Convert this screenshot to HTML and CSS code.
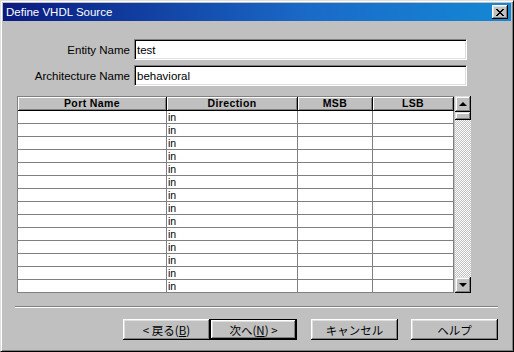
FILE: index.html
```html
<!DOCTYPE html>
<html lang="ja">
<head>
    <meta charset="UTF-8">
    <title>Define VHDL Source</title>
    <link rel="stylesheet" href="styles.css">
</head>
<body>
    <div class="window">
        <div class="titlebar">
            <span class="title">Define VHDL Source</span>
            <button class="close">
                <svg width="8" height="7" viewBox="0 0 8 7" shape-rendering="crispEdges">
                    <path d="M0 0h2v1h1v1h2v-1h1v-1h2v1h-1v1h-1v1h-1v1h1v1h1v1h1v1h-2v-1h-1v-1h-2v1h-1v1h-2v-1h1v-1h1v-1h1v-1h-1v-1h-1v-1h-1z" fill="#000"/>
                </svg>
            </button>
        </div>

        <div class="content">
            <div class="form">
                <label>Entity Name</label>
                <input type="text" value="test">
                <label>Architecture Name</label>
                <input type="text" value="behavioral">
            </div>

            <div class="ports">
                <div class="grid" id="grid">
                    <div class="hd">Port Name</div>
                    <div class="hd">Direction</div>
                    <div class="hd">MSB</div>
                    <div class="hd">LSB</div>
                </div>
                <div class="scrollbar">
                    <div class="sb-btn"><span class="arrow up"></span></div>
                    <div class="sb-thumb"></div>
                    <div class="sb-track"></div>
                    <div class="sb-btn"><span class="arrow down"></span></div>
                </div>
            </div>

            <div class="separator"></div>

            <div class="buttons">
                <button class="btn">&lt; 戻る(<u>B</u>)</button>
                <button class="btn default">次へ(<u>N</u>) &gt;</button>
                <button class="btn gap">キャンセル</button>
                <button class="btn gap2">ヘルプ</button>
            </div>
        </div>
    </div>

    <script>
        // 14 visible port rows, direction defaults to "in"
        const grid = document.getElementById('grid');
        for (let i = 0; i < 14; i++) {
            ['', 'in', '', ''].forEach(text => {
                const cell = document.createElement('div');
                cell.className = 'cell';
                cell.textContent = text;
                grid.appendChild(cell);
            });
        }
    </script>
</body>
</html>
```

FILE: styles.css
```css
* {
    margin: 0;
    padding: 0;
    box-sizing: border-box;
}

body {
    font-family: "Liberation Sans", "Noto Sans CJK JP", sans-serif;
    font-size: 11.5px;
    background: #c0c0c0;
}

.window {
    width: 514px;
    height: 352px;
    padding: 2px;
    background: #c0c0c0;
    border: 1px solid;
    border-color: #dfdfdf #000 #000 #dfdfdf;
    box-shadow: inset 1px 1px #fff, inset -1px -1px #808080;
}

.titlebar {
    height: 18px;
    display: flex;
    align-items: center;
    justify-content: space-between;
    background: linear-gradient(to right, #0a1a80, #1a6ac8 60%, #1488d4);
}

.title {
    color: #fff;
    padding-left: 3px;
    font-size: 11.5px;
}

.close {
    width: 16px;
    height: 14px;
    margin-right: 3px;
    border: none;
    background: #c0c0c0;
    display: flex;
    align-items: center;
    justify-content: center;
    box-shadow: inset -1px -1px #000, inset 1px 1px #fff, inset -2px -2px #808080, inset 2px 2px #dfdfdf;
}

.content {
    padding-top: 18px;
}

/* 名前入力 */
.form {
    display: grid;
    grid-template-columns: 128px 333px;
    column-gap: 3px;
    row-gap: 5px;
}

.form label {
    text-align: right;
    align-self: center;
    padding-right: 1px;
    color: #000;
}

.form input {
    height: 21px;
    padding: 0 2px;
    font-family: "Liberation Sans", sans-serif;
    font-size: 11.5px;
    color: #000;
    background: #fff;
    border: 1px solid;
    border-color: #808080 #fff #fff #808080;
    box-shadow: inset 1px 1px #000, inset -1px -1px #dfdfdf;
    outline: none;
}

/* ポート表 */
.ports {
    display: flex;
    margin: 10px 0 0 14px;
}

.grid {
    display: grid;
    grid-template-columns: 149px 131px 75px 81px;
    grid-auto-rows: 13px;
    grid-template-rows: 14px;
    border-left: 1px solid #808080;
    border-top: 1px solid #808080;
}

.hd {
    background: #c0c0c0;
    font-weight: bold;
    font-size: 10.5px;
    letter-spacing: 0.4px;
    text-align: center;
    line-height: 12px;
    border-right: 1px solid #000;
    border-bottom: 1px solid #000;
    box-shadow: inset 1px 1px #fff, inset -1px -1px #808080;
}

.cell {
    background: #fff;
    border-right: 1px solid #808080;
    border-bottom: 1px solid #808080;
    font-size: 10.5px;
    line-height: 12px;
    padding-left: 1px;
}

.scrollbar {
    width: 16px;
    margin-left: 1px;
    display: flex;
    flex-direction: column;
}

.sb-btn,
.sb-thumb {
    background: #c0c0c0;
    box-shadow: inset -1px -1px #000, inset 1px 1px #dfdfdf, inset -2px -2px #808080, inset 2px 2px #fff;
}

.sb-btn {
    height: 16px;
    display: flex;
    align-items: center;
    justify-content: center;
}

.sb-thumb {
    height: 8px;
}

.sb-track {
    flex: 1;
    background-color: #c0c0c0;
    background-image: repeating-conic-gradient(#fff 0 25%, #c0c0c0 0 50%);
    background-size: 2px 2px;
}

.arrow {
    width: 0;
    height: 0;
    border-left: 4px solid transparent;
    border-right: 4px solid transparent;
}

.arrow.up {
    border-bottom: 4px solid #000;
}

.arrow.down {
    border-top: 4px solid #000;
}

.separator {
    width: 483px;
    margin: 13px 0 0 12px;
    border-top: 1px solid #808080;
    border-bottom: 1px solid #fff;
}

/* ボタン */
.buttons {
    display: flex;
    margin-top: 11px;
    padding-left: 120px;
}

.btn {
    width: 87px;
    height: 21px;
    border: none;
    background: #c0c0c0;
    font-family: "Noto Sans CJK JP", sans-serif;
    font-size: 11.5px;
    color: #000;
    box-shadow: inset -1px -1px #000, inset 1px 1px #fff, inset -2px -2px #808080, inset 2px 2px #dfdfdf;
}

.btn.default {
    border: 1px solid #000;
}

.btn.gap {
    margin-left: 14px;
}

.btn.gap2 {
    margin-left: 13px;
}
```
